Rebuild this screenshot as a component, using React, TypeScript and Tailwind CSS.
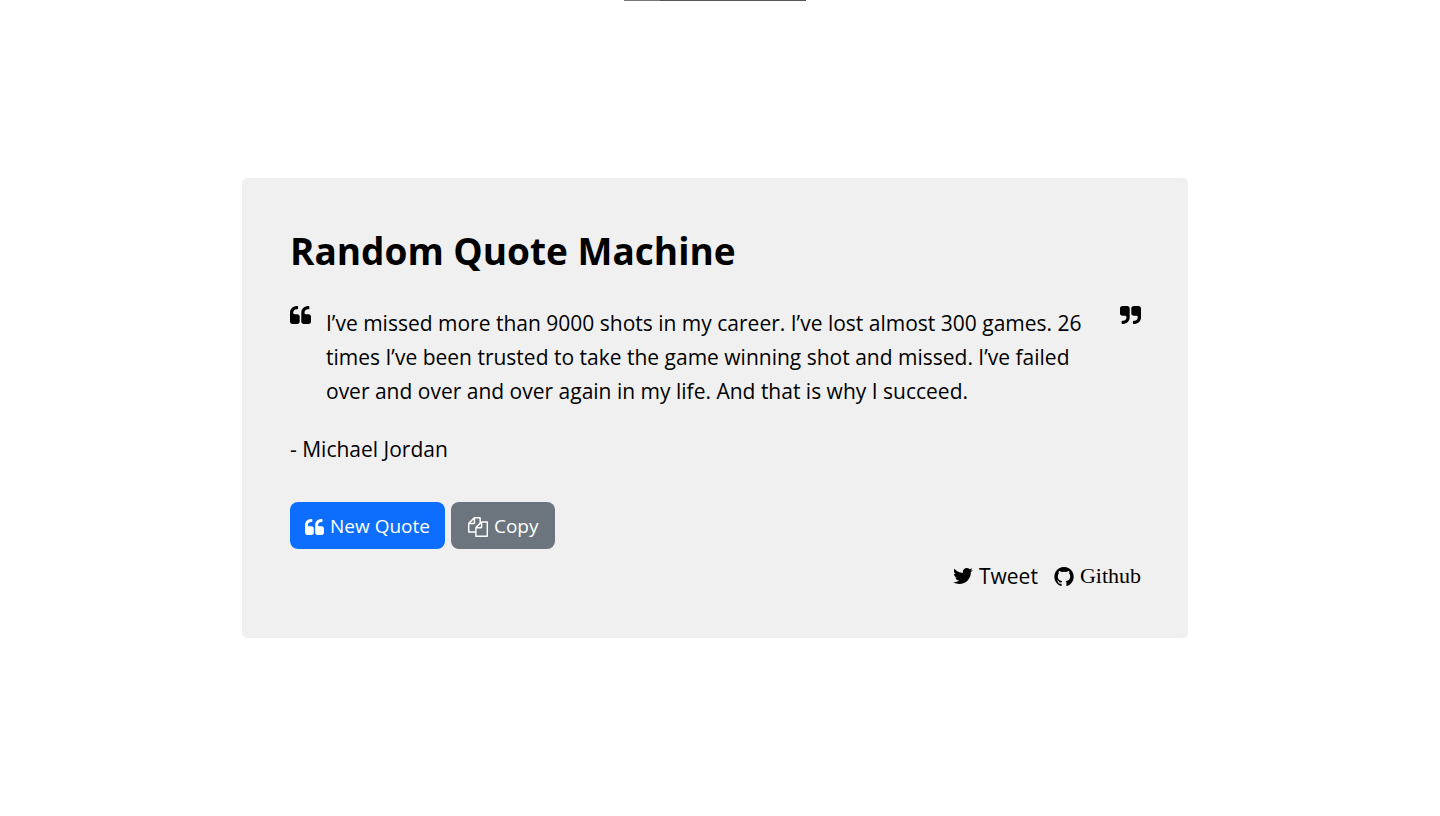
import React, { useState } from "react";

const quotes = [
    {
        text: "I’ve missed more than 9000 shots in my career. I’ve lost almost 300 games. 26 times I’ve been trusted to take the game winning shot and missed. I’ve failed over and over and over again in my life. And that is why I succeed.",
        author: "Michael Jordan",
    },
    {
        text: "Life is what happens to you while you’re busy making other plans.",
        author: "John Lennon",
    },
    {
        text: "The mind is everything. What you think you become.",
        author: "Buddha",
    },
];

type IconProps = { className?: string };

function QuoteLeft({ className }: IconProps) {
    return (
        <svg
            className={className}
            viewBox="64 128 1664 1408"
            fill="currentColor"
            aria-hidden="true"
        >
            <path d="M832 960v384q0 80-56 136t-136 56h-384q-80 0-136-56t-56-136v-704q0-104 40.5-198.5t109.5-163.5 163.5-109.5 198.5-40.5h64q26 0 45 19t19 45v128q0 26-19 45t-45 19h-64q-106 0-181 75t-75 181v32q0 40 28 68t68 28h224q80 0 136 56t56 136zm896 0v384q0 80-56 136t-136 56h-384q-80 0-136-56t-56-136v-704q0-104 40.5-198.5t109.5-163.5 163.5-109.5 198.5-40.5h64q26 0 45 19t19 45v128q0 26-19 45t-45 19h-64q-106 0-181 75t-75 181v32q0 40 28 68t68 28h224q80 0 136 56t56 136z" />
        </svg>
    );
}

function QuoteRight({ className }: IconProps) {
    return (
        <svg
            className={className}
            viewBox="64 128 1664 1408"
            fill="currentColor"
            aria-hidden="true"
        >
            <path d="M832 320v704q0 104-40.5 198.5t-109.5 163.5-163.5 109.5-198.5 40.5h-64q-26 0-45-19t-19-45v-128q0-26 19-45t45-19h64q106 0 181-75t75-181v-32q0-40-28-68t-68-28h-224q-80 0-136-56t-56-136v-384q0-80 56-136t136-56h384q80 0 136 56t56 136zm896 0v704q0 104-40.5 198.5t-109.5 163.5-163.5 109.5-198.5 40.5h-64q-26 0-45-19t-19-45v-128q0-26 19-45t45-19h64q106 0 181-75t75-181v-32q0-40-28-68t-68-28h-224q-80 0-136-56t-56-136v-384q0-80 56-136t136-56h384q80 0 136 56t56 136z" />
        </svg>
    );
}

function CopyIcon({ className }: IconProps) {
    return (
        <svg
            className={className}
            viewBox="0 0 1792 1792"
            fill="currentColor"
            aria-hidden="true"
        >
            <path d="M1696 384q40 0 68 28t28 68v1216q0 40-28 68t-68 28h-960q-40 0-68-28t-28-68v-288h-544q-40 0-68-28t-28-68v-672q0-40 20-88t48-76l408-408q28-28 76-48t88-20h416q40 0 68 28t28 68v328q68-40 128-40h416zm-544 213l-299 299h299v-299zm-640-384l-299 299h299v-299zm196 647l316-316v-416h-384v416q0 40-28 68t-68 28h-416v640h512v-256q0-40 20-88t48-76zm956 804v-1152h-384v416q0 40-28 68t-68 28h-416v640h896z" />
        </svg>
    );
}

function TwitterIcon({ className }: IconProps) {
    return (
        <svg
            className={className}
            viewBox="108 256 1576 1280"
            fill="currentColor"
            aria-hidden="true"
        >
            <path d="M1684 408q-67 98-162 167 1 14 1 42 0 130-38 259.5t-115.5 248.5-184.5 210.5-258 146-323 54.5q-271 0-496-145 35 4 78 4 225 0 401-138-105-2-188-64.5t-114-159.5q33 5 61 5 43 0 85-11-112-23-185.5-111.5t-73.5-205.5v-4q68 38 146 41-66-44-105-115t-39-154q0-88 44-163 121 149 294.5 238.5t371.5 99.5q-8-38-8-74 0-134 94.5-228.5t228.5-94.5q140 0 236 102 109-21 205-78-37 115-142 178 93-10 186-50z" />
        </svg>
    );
}

function GithubIcon({ className }: IconProps) {
    return (
        <svg
            className={className}
            viewBox="128 128 1536 1504"
            fill="currentColor"
            aria-hidden="true"
        >
            <path d="M896 128q209 0 385.5 103t279.5 279.5 103 385.5q0 251-146.5 451.5t-378.5 277.5q-27 5-40-7t-13-30q0-3 .5-76.5t.5-134.5q0-97-52-142 57-6 102.5-18t94-39 81-66.5 53-105 20.5-150.5q0-119-79-206 37-91-8-204-28-9-81 11t-92 44l-38 24q-93-26-192-26t-192 26q-16-11-42.5-27t-83.5-38.5-85-13.5q-45 113-8 204-79 87-79 206 0 85 20.5 150t52.5 105 80.5 67 94 39 102.5 18q-39 36-49 103-21 10-45 15t-57 5-65.5-21.5-55.5-62.5q-19-32-48.5-52t-49.5-24l-20-3q-21 0-29 4.5t-5 11.5 9 14 13 12l7 5q22 10 43.5 38t31.5 51l10 23q13 38 44 61.5t67 30 69.5 7 55.5-3.5l23-4q0 38 .5 88.5t.5 54.5q0 18-13 30t-40 7q-232-77-378.5-277.5t-146.5-451.5q0-209 103-385.5t279.5-279.5 385.5-103z" />
        </svg>
    );
}

export default function App() {
    const [index, setIndex] = useState(0);
    const { text, author } = quotes[index];

    const handleNewQuote = () => {
        setIndex((index + 1) % quotes.length);
    };

    const handleCopy = () => {
        navigator.clipboard.writeText(`${text} - ${author}`);
    };

    return (
        <main className="relative flex min-h-screen items-center justify-center bg-white pr-2.5 font-['Open_Sans','Noto_Sans',sans-serif] text-[21px] leading-[34px] text-black">
            <div className="absolute top-0 right-2.5 left-0 mx-auto flex h-px w-[182px] bg-[#555]">
                <div className="w-1/5 bg-[#777]" />
            </div>
            <section className="w-full max-w-[946px] rounded-[5px] bg-[#f0f0f0] pt-12 pr-[47px] pb-[45px] pl-12">
                <h1 className="text-[37px] leading-[50px] font-bold">
                    Random Quote Machine
                </h1>
                <div className="mt-[30px] flex items-start">
                    <QuoteLeft className="h-[18px] w-[21px] shrink-0" />
                    <p className="mx-[15px] flex-1">{text}</p>
                    <QuoteRight className="h-[18px] w-[21px] shrink-0" />
                </div>
                <p className="mt-6">- {author}</p>
                <div className="mt-9 flex gap-1.5 text-[19px] leading-[31px] text-white">
                    <button
                        onClick={handleNewQuote}
                        className="flex items-center gap-1.5 rounded-lg bg-[#0d6efd] px-[15px] pt-[9px] pb-[7px]"
                    >
                        <QuoteLeft className="h-4 w-[19px]" />
                        New Quote
                    </button>
                    <button
                        onClick={handleCopy}
                        className="flex items-center gap-1.5 rounded-lg bg-[#6c757d] px-[17px] pt-[9px] pb-[7px]"
                    >
                        <CopyIcon className="size-5" />
                        Copy
                    </button>
                </div>
                <div className="mt-2.5 flex justify-end gap-4">
                    <a
                        href="https://twitter.com/intent/tweet"
                        className="flex items-center gap-1.5"
                    >
                        <TwitterIcon className="h-4 w-5" />
                        Tweet
                    </a>
                    <a
                        href="https://github.com"
                        className="flex items-center gap-1.5 font-['Liberation_Serif',serif] text-[22px]"
                    >
                        <GithubIcon className="h-[19px] w-5" />
                        Github
                    </a>
                </div>
            </section>
        </main>
    );
}
